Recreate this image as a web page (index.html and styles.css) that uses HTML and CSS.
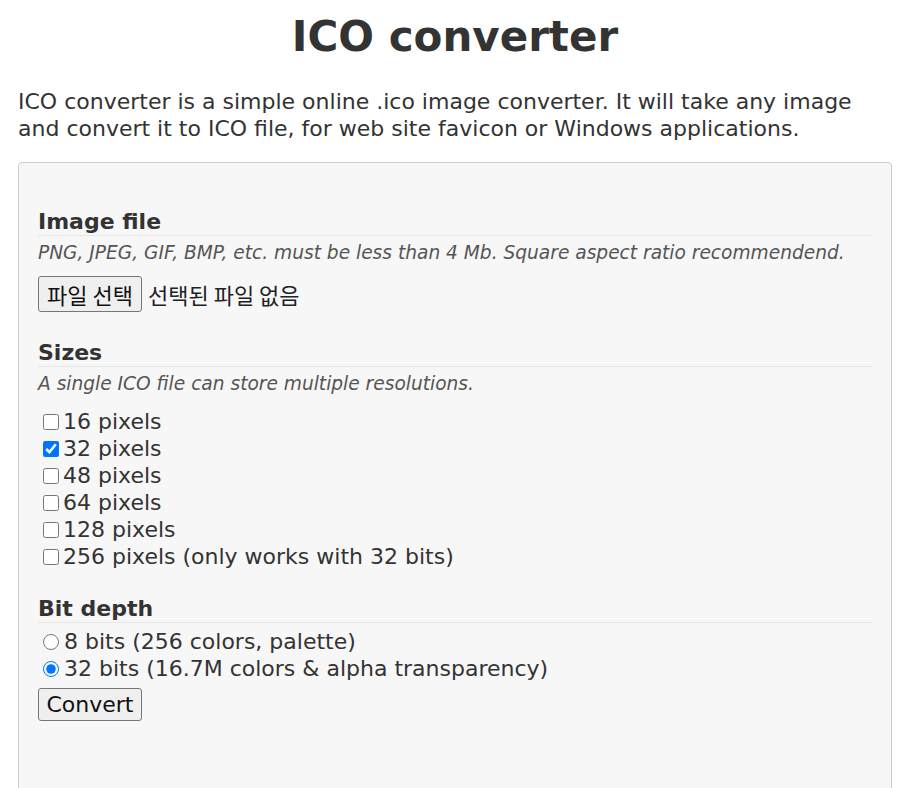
FILE: index.html
```html
<!DOCTYPE html>
<html lang="en">
<head>
<meta charset="utf-8">
<title>ICO converter</title>
<link rel="stylesheet" href="styles.css">
</head>
<body>
<h1 class="title">ICO converter</h1>
<p class="intro">ICO converter is a simple online .ico image converter. It will take any image and convert it to ICO file, for web site favicon or Windows applications.</p>
<form class="panel">
  <section class="group">
    <h3 class="group-title">Image file</h3>
    <p class="hint">PNG, JPEG, GIF, BMP, etc. must be less than 4 Mb. Square aspect ratio recommendend.</p>
    <div class="file-row">
      <button type="button" class="btn btn-file">파일 선택</button><span class="file-name">선택된 파일 없음</span>
    </div>
  </section>
  <section class="group">
    <h3 class="group-title">Sizes</h3>
    <p class="hint">A single ICO file can store multiple resolutions.</p>
    <div class="options">
      <label class="option"><input type="checkbox" class="check">16 pixels</label>
      <label class="option"><input type="checkbox" class="check" checked>32 pixels</label>
      <label class="option"><input type="checkbox" class="check">48 pixels</label>
      <label class="option"><input type="checkbox" class="check">64 pixels</label>
      <label class="option"><input type="checkbox" class="check">128 pixels</label>
      <label class="option"><input type="checkbox" class="check">256 pixels (only works with 32 bits)</label>
    </div>
  </section>
  <section class="group group-bits">
    <h3 class="group-title">Bit depth</h3>
    <div class="options options-radio">
      <label class="option"><input type="radio" name="bits" class="radio">8 bits (256 colors, palette)</label>
      <label class="option"><input type="radio" name="bits" class="radio" checked>32 bits (16.7M colors &amp; alpha transparency)</label>
    </div>
    <button type="button" class="btn btn-convert">Convert</button>
  </section>
</form>
</body>
</html>
```
FILE: styles.css
```css
html, body {
  margin: 0;
  background: #fff;
}
body {
  padding: 0 19px 0 18px;
  font-family: "DejaVu Sans", Verdana, "Noto Sans CJK KR", sans-serif;
  font-size: 22px;
  line-height: 27px;
  color: #333;
}
.title {
  margin: 8px 0 0;
  text-align: center;
  font-size: 42px;
  line-height: 57px;
  font-weight: bold;
}
.intro {
  margin: 23px 0 0;
}
.panel {
  margin-top: 20px;
  background: #f7f7f7;
  border: 1px solid #ccc;
  border-radius: 4px;
  padding: 20px 19px 100px;
}
.group {
  margin-top: 28px;
}
.group:first-child {
  margin-top: 26px;
}
.group-bits {
  margin-top: 26px;
}
.group-title {
  margin: 0;
  font-size: 22px;
  line-height: 26px;
  font-weight: bold;
  border-bottom: 1px solid #e6e6e6;
}
.hint {
  margin: 6px 0 0;
  font-size: 18.6px;
  line-height: 22px;
  font-style: italic;
  color: #555;
}
.file-row {
  margin-top: 12px;
  display: flex;
  align-items: center;
  font-family: "Noto Sans CJK KR", sans-serif;
}
.btn {
  background: #efefef;
  border: 1px solid #767676;
  border-radius: 3px;
  color: #111;
  font-size: 22px;
  cursor: pointer;
}
.btn-file {
  font-family: "Noto Sans CJK KR", sans-serif;
  line-height: 30px;
  padding: 2px 0;
  width: 104px;
}
.file-name {
  margin-left: 6px;
  color: #222;
}
.options {
  margin-top: 13px;
  display: flex;
  flex-direction: column;
}
.options-radio {
  margin-top: 5px;
}
.option {
  display: flex;
  align-items: center;
  line-height: 27px;
}
.check {
  width: 16px;
  height: 16px;
  margin: 0 4px 0 5px;
}
.radio {
  width: 16px;
  height: 16px;
  margin: 0 5px 0 5px;
}
.btn-convert {
  margin-top: 6px;
  font-family: "DejaVu Sans", Verdana, sans-serif;
  line-height: 23px;
  padding: 4px 0;
  width: 104px;
}
```
